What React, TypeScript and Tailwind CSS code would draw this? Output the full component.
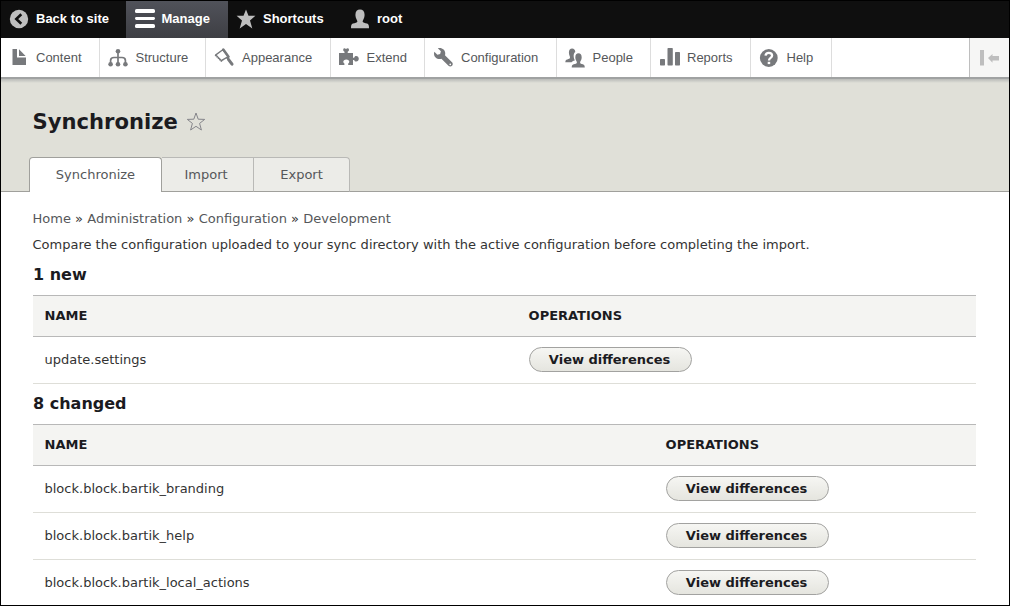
import type { ReactNode } from "react";

const glyph = "block h-5 w-5 shrink-0";

function BackIcon() {
  return (
    <svg className={glyph} viewBox="0 0 20 20">
      <circle cx="10" cy="10" r="9.200" fill="#bebebe" />
      <path d="M12.300 5.200 7.300 10l5 4.800" fill="none" stroke="#0f0f0f" strokeWidth="2.600" />
    </svg>
  );
}

function MenuIcon() {
  return (
    <svg className={glyph} viewBox="0 0 20 20" fill="#fff">
      <rect x="0" y="0" width="20" height="4" rx="1.600" />
      <rect x="0" y="8" width="20" height="3" rx="1.400" />
      <rect x="0" y="15" width="20" height="4" rx="1.600" />
    </svg>
  );
}

function StarIcon() {
  return (
    <svg className={glyph} viewBox="0 0 20 20" fill="#bebebe">
      <path d="M10 .4 12.500 6.800h6.900l-5.400 4.600 2.300 8-6.300-4.500-6.300 4.500 2.300-8L.6 6.800h6.900z" />
    </svg>
  );
}

function UserIcon() {
  return (
    <svg className={glyph} viewBox="0 0 20 20" fill="#bebebe">
      <path d="M1 19.200c0-2.600.4-4 2-4.600 1.800-.7 4.400-.8 4.400-2.200 0-1.200-2-2.800-2-6.400C5.400 2.400 7.200.6 10 .6s4.600 1.800 4.600 5.400c0 3.600-2 5.200-2 6.400 0 1.400 2.600 1.500 4.400 2.200 1.600.6 2 2 2 4.600z" />
    </svg>
  );
}

function FileIcon() {
  return (
    <svg className={glyph} viewBox="0 0 20 20" fill="#77797c">
      <path d="M3.500 1H8v8.500h9V17H3.500z" />
      <path d="M10 1.200 16.600 8H10z" />
    </svg>
  );
}

function StructureIcon() {
  return (
    <svg className={glyph} viewBox="0 0 20 20" fill="#77797c">
      <circle cx="10" cy="3.300" r="2.300" />
      <circle cx="2.600" cy="16.200" r="2.300" />
      <circle cx="10" cy="16.200" r="2.300" />
      <circle cx="17.400" cy="16.200" r="2.300" />
      <path d="M10 3v13M2.600 16v-3.600C2.600 10 4 9.500 6 9.500h8c2 0 3.400.5 3.400 2.900V16" fill="none" stroke="#77797c" strokeWidth="1.700" />
    </svg>
  );
}

function BrushIcon() {
  return (
    <svg className={glyph} viewBox="0 0 20 20">
      <path d="M8.800 1.800 1.800 6.900 7.300 12.600l7-4z" fill="#fff" stroke="#77797c" strokeWidth="1.300" strokeLinejoin="round" />
      <path d="M1.200 6.900 7.300 13l1.700-1" fill="none" stroke="#77797c" strokeWidth="1.600" strokeDasharray="1.400 .6" />
      <path d="M9.300 1.500 14.500 8.700" fill="none" stroke="#77797c" strokeWidth="2.500" strokeLinecap="round" />
      <path d="M12.800 9.300 15 11.800" stroke="#77797c" strokeWidth="2" />
      <path d="m14.600 11.600 3.400 4.600" stroke="#77797c" strokeWidth="3" strokeLinecap="round" />
    </svg>
  );
}

function PuzzleIcon() {
  return (
    <svg className={glyph} viewBox="0 0 20 20" fill="#77797c">
      <path d="M0 5h5.500V3.800C4.600 3.300 4.200 2.700 4.200 1.800 4.200.6 5.100 0 5.900.4c.7.300 1.400.3 2.200 0 .9-.4 1.900.2 1.900 1.400 0 .9-.4 1.500-1.300 2V5H14v4.700h1.200c.2-1 .9-1.700 2-1.700 1.500 0 2.600 1.200 2.600 2.800s-1.100 2.800-2.600 2.800c-1.100 0-1.800-.7-2-1.700H14V17H9.200v-1.500c.7-.5 1.100-1 1.100-1.800 0-1.300-1.100-2.300-3-2.300s-3 1-3 2.300c0 .8.400 1.300 1.100 1.800V17H0z" />
    </svg>
  );
}

function WrenchIcon() {
  return (
    <svg className={glyph} viewBox="0 0 16 16" fill="#77797c">
      <path d="M14.416 11.386l-.01-.009-5.656-5.656c.15-.449.252-.921.252-1.421 0-2.485-2.016-4.300-4.502-4.300-.505 0-.981.102-1.434.255l2.431 2.431-.588 2.196-2.196.588-2.445-2.445c-.162.464-.268.956-.268 1.475 0 2.486 2.014 4.300 4.500 4.300.5 0 .972-.102 1.421-.251l5.667 5.665c.781.781 2.047.781 2.828 0s.781-2.047 0-2.828zm-1.414 2.414c-.453 0-.7-.347-.7-.7s.247-.7.7-.7.7.347.7.700-.247.700-.7.700z" />
    </svg>
  );
}

function PeopleIcon() {
  return (
    <svg className={glyph} viewBox="0 0 20 20" fill="#77797c">
      <path d="M.3 14.300c.1-1.800.6-2.400 2-2.800 1.600-.4 2.700-.8 2.700-1.900 0-1.400-1.100-2.300-1.100-5C3.900 1.900 5.200.5 7.100.5s3.100 1.200 3.200 3.500C8.900 5 8.500 6.600 8.700 8.600c.1 1.700.7 3 1.100 3.800-1.700.5-2.800.9-3.200 1.900z" />
      <path d="M6.700 19.600c.1-2.200.5-2.900 2-3.300 1.600-.4 3.200-.7 3.200-1.900s-1.600-2-1.600-4.900c0-3.100 1.300-4.300 3.200-4.300s3.200 1.200 3.200 4.300c0 2.900-1.600 3.700-1.600 4.900s1.300 1.500 2.800 1.900c1.300.4 1.800 1.100 1.900 3.300z" />
    </svg>
  );
}

function ChartIcon() {
  return (
    <svg className={glyph} viewBox="0 0 20 20" fill="#77797c">
      <rect x="0" y="11" width="5" height="6.500" rx=".7" />
      <rect x="7.500" y="0" width="5.300" height="17.500" rx=".7" />
      <rect x="15" y="4" width="5" height="13.500" rx=".7" />
    </svg>
  );
}

function HelpIcon() {
  return (
    <svg className={glyph} viewBox="0 0 20 20">
      <circle cx="9.800" cy="10" r="8.900" fill="#77797c" />
      <path d="M6.500 7.600C6.700 5.700 7.900 4.800 9.800 4.800c2 0 3.300 1.100 3.300 2.700 0 2.500-3.100 2.300-3.100 4.900" fill="none" stroke="#fff" strokeWidth="2.300" />
      <rect x="8.700" y="13.800" width="2.500" height="2.300" fill="#fff" />
    </svg>
  );
}

function CollapseIcon() {
  return (
    <svg className="block h-4 w-5" viewBox="0 0 20 16" fill="#bebebe">
      <rect x="0" y="0" width="4" height="15.500" />
      <path d="M8 8 12.500 4V6H19v4.500h-6.500v2.200z" />
    </svg>
  );
}

function BarItem({ icon, label, className }: { icon: ReactNode; label: string; className: string }) {
  return (
    <a className={`flex h-full items-center pb-[2px] text-[13px] font-bold text-white ${className}`}>
      {icon}
      <span className="whitespace-nowrap">{label}</span>
    </a>
  );
}

const trayItems = [
  { label: "Content", icon: <FileIcon />, className: "w-[99px] pl-[8px] gap-[7px]" },
  { label: "Structure", icon: <StructureIcon />, className: "w-[106px] pl-[8px] gap-[7.500px]" },
  { label: "Appearance", icon: <BrushIcon />, className: "w-[125px] pl-[8px] gap-[8px]" },
  { label: "Extend", icon: <PuzzleIcon />, className: "w-[94px] pl-[8px] gap-[7.500px]" },
  { label: "Configuration", icon: <WrenchIcon />, className: "w-[132px] pl-[9px] gap-[7px]" },
  { label: "People", icon: <PeopleIcon />, className: "w-[94px] pl-[8px] gap-[7.500px]" },
  { label: "Reports", icon: <ChartIcon />, className: "w-[100px] pl-[9px] gap-[7px]" },
  { label: "Help", icon: <HelpIcon />, className: "w-[81px] pl-[8px] gap-[7.500px]" },
];

function ConfigTable({ rows, columns }: { rows: string[]; columns: string }) {
  return (
    <div>
      <div className={`grid h-[42px] items-center border-y border-[#b8b8b8] bg-[#f4f4f2] font-bold text-[#1b1b1f] ${columns}`}>
        <span className="pl-[11.500px]">NAME</span>
        <span>OPERATIONS</span>
      </div>
      {rows.map((name) => (
        <div key={name} className={`grid h-[47px] items-center border-b border-[#deded8] text-[#333] ${columns}`}>
          <span className="pl-[11.500px]">{name}</span>
          <button className="mb-[2px] h-[25px] w-[163px] rounded-full border border-[#a2a2a0] bg-linear-to-b from-[#f6f6f3] to-[#e5e5df] pr-px font-bold leading-[23px] text-[#1b1b1f]">
            View differences
          </button>
        </div>
      ))}
    </div>
  );
}

export default function App() {
  return (
    <div className="flex h-[606px] w-[1010px] flex-col overflow-hidden border border-black bg-white font-['DejaVu_Sans',sans-serif] text-[13px]">
      <nav className="flex h-[37px] shrink-0 bg-[#0f0f0f] font-['Liberation_Sans',sans-serif]">
        <BarItem icon={<BackIcon />} label="Back to site" className="w-[125px] gap-[7px] pl-[8px]" />
        <BarItem icon={<MenuIcon />} label="Manage" className="w-[102px] gap-[6.500px] bg-linear-to-b from-[#50525a] to-[#3e3f44] pl-[9px]" />
        <BarItem icon={<StarIcon />} label="Shortcuts" className="w-[114px] gap-[7px] pl-[8px]" />
        <BarItem icon={<UserIcon />} label="root" className="w-[80px] gap-[7px] pl-[8px]" />
      </nav>

      <nav className="flex h-[39px] shrink-0 justify-between bg-white font-['Liberation_Sans',sans-serif] text-[#55575a]">
        <div className="flex">
          {trayItems.map((item) => (
            <a key={item.label} className={`flex h-full items-center border-r border-[#dddddd] ${item.className}`}>
              {item.icon}
              <span className="whitespace-nowrap">{item.label}</span>
            </a>
          ))}
        </div>
        <div className="flex w-[40px] items-center border-l border-[#bebebe] bg-[#f6f6f5] pl-[10px]">
          <CollapseIcon />
        </div>
      </nav>

      <header className="flex h-[115px] shrink-0 flex-col justify-between border-b border-[#a0a09c] bg-[#e0e0d8]">
        <div>
          <div className="h-[2px] bg-[#a0a2a2]" />
          <div className="h-[4px] bg-linear-to-b from-[#b9bbb8] to-[#e0e0d8]" />
          <div className="flex items-center gap-[8px] pl-[31.500px] pt-[26px]">
            <h1 className="text-[21.125px] font-bold leading-[26px] text-[#1b1b1f]">Synchronize</h1>
            <svg className="block h-5 w-5" viewBox="0 0 20 20" fill="none" stroke="#85858a">
              <path d="M10 1 12.200 7.200l6.500.2-5.100 4 1.800 6.600-5.400-3.700L4.600 18l1.800-6.600-5.100-4 6.500-.2z" />
            </svg>
          </div>
        </div>
        <div className="-mb-px flex h-[35px] items-end pl-[28px] text-[#55575a]">
          <a className="flex h-[35px] w-[133px] items-center justify-center rounded-t-[4px] border border-b-0 border-[#a0a09c] bg-white">Synchronize</a>
          <a className="flex h-[35px] w-[92px] items-center justify-center border-y border-r border-t-[#b9b9b6] border-r-[#b9b9b6] border-b-[#a0a09c] bg-[#ecece8] pr-[3px]">Import</a>
          <a className="flex h-[35px] w-[96px] items-center justify-center rounded-tr-[4px] border-y border-r border-t-[#b9b9b6] border-r-[#b9b9b6] border-b-[#a0a09c] bg-[#ecece8]">Export</a>
        </div>
      </header>

      <main className="flex flex-col pl-[32px] pr-[33px] pt-[17px] text-[#333]">
        <nav className="-ml-[0.500px] flex gap-[4.200px] leading-[20px] text-[#55575a]">
          <a>Home</a><span className="text-[#333]">»</span>
          <a>Administration</a><span className="text-[#333]">»</span>
          <a>Configuration</a><span className="text-[#333]">»</span>
          <a>Development</a>
        </nav>
        <p className="-ml-[0.500px] mt-[6px] leading-[20px]">
          Compare the configuration uploaded to your sync directory with the active configuration before completing the import.
        </p>
        <h3 className="mb-[8px] mt-[8px] text-[16px] font-bold leading-[24px] text-[#1b1b1f]">1 new</h3>
        <ConfigTable rows={["update.settings"]} columns="grid-cols-[495.600px_1fr]" />
        <h3 className="mb-[8px] mt-[8px] text-[16px] font-bold leading-[24px] text-[#1b1b1f]">8 changed</h3>
        <ConfigTable
          rows={["block.block.bartik_branding", "block.block.bartik_help", "block.block.bartik_local_actions"]}
          columns="grid-cols-[632.600px_1fr]"
        />
      </main>
    </div>
  );
}
